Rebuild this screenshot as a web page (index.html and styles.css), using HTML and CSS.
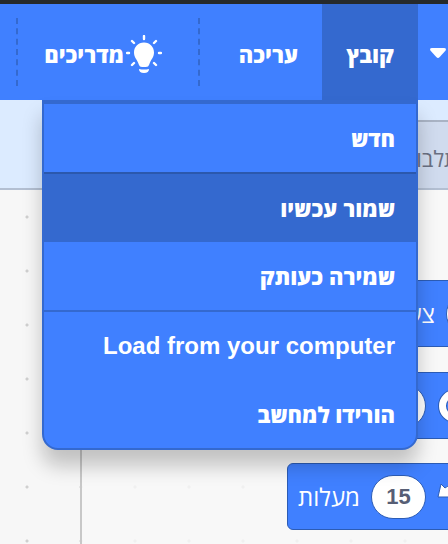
FILE: index.html
```html
<!DOCTYPE html>
<html lang="he" dir="rtl">
<head>
<meta charset="utf-8">
<title>Scratch</title>
<link rel="stylesheet" href="styles.css">
</head>
<body>
<header class="menu-bar">
  <button class="bar-item language" type="button" aria-label="שפה">
    <svg width="16" height="10" viewBox="0 0 16 10"><path d="M2 0H14Q17 0 15.400 2.800L9.700 9Q8 10.800 6.300 9L.6 2.800Q-1 0 2 0Z" fill="#fff"/></svg>
  </button>
  <div class="file">
    <button class="bar-item open" type="button">קובץ</button>
    <ul class="menu">
      <li><button class="menu-item" type="button">חדש</button></li>
      <li class="section strong"><button class="menu-item active" type="button">שמור עכשיו</button></li>
      <li><button class="menu-item" type="button">שמירה כעותק</button></li>
      <li class="section"><button class="menu-item latin" type="button" lang="en" dir="auto">Load from your computer</button></li>
      <li><button class="menu-item" type="button">הורידו למחשב</button></li>
    </ul>
  </div>
  <button class="bar-item" type="button">עריכה</button>
  <span class="divider"></span>
  <button class="bar-item guides" type="button">
    <svg width="36" height="38" viewBox="0 0 36 38" fill="none">
      <path d="M18 7.500C12 7.500 8 12 8 17.500C8 22 10.500 24 12 27.500L13 30Q13.500 32 16 32H20Q22.500 32 23 30L24 27.500C25.500 24 28 22 28 17.500C28 12 24 7.500 18 7.500Z" fill="#fff"/>
      <path d="M13 34Q18 35 23 34Q23 38 18 38Q13 38 13 34Z" fill="#fff"/>
      <path d="M18 1V4M6 6L8 8M30 6L28 8M1 18H3M33 18H35M6 30L8 28M30 30L28 28" stroke="#fff" stroke-width="2.400" stroke-linecap="round"/>
    </svg>
    <span>מדריכים</span>
  </button>
  <span class="divider"></span>
</header>
<nav class="tabs"><button class="tab" type="button">תלבושות</button></nav>
<main class="workspace">
  <div class="flyout"></div>
  <div class="block steps"><span class="value"></span><span>צעדים</span></div>
  <div class="block turn-right">
    <svg width="40" height="40" viewBox="0 0 40 40" fill="none"><circle cx="18" cy="20" r="12.500" stroke="#2c5cb5" stroke-width="9"/><circle cx="18" cy="20" r="12.500" stroke="#fff" stroke-width="7"/></svg>
    <span class="value"></span>
  </div>
  <div class="block turn-left">
    <svg width="40" height="40" viewBox="0 0 40 40"><path d="M4 7L8 11Q20 0 35 12V21Q26 14 19 18L15 20H1Z" fill="#fff" stroke="#2c5cb5"/></svg>
    <span class="value">15</span><span>מעלות</span>
  </div>
</main>
</body>
</html>
```
FILE: styles.css
```css
:root {
  --blue: #4080ff;
  --dark: #3469cf;
  --edge: #2c5cb5;
}

* {
  box-sizing: border-box;
}

body {
  margin: 0;
  height: 100vh;
  display: flex;
  flex-direction: column;
  overflow: hidden;
  font-family: "Open Sans", "Liberation Sans", sans-serif;
  font-size: 22px;
}

button {
  margin: 0;
  border: 0;
  background: none;
  color: #fff;
  font: inherit;
  font-weight: 800;
}

.menu-bar {
  position: relative;
  z-index: 2;
  flex: none;
  display: flex;
  align-items: center;
  height: 100px;
  border-top: 4px solid #262a2b;
  background: var(--blue);
}

.bar-item {
  flex: none;
  display: flex;
  align-items: center;
  height: 96px;
  padding: 4px 24px 0;
}

.language {
  width: 30px;
  padding: 2px 2px 0 12px;
}

.language svg {
  flex: none;
}

.file {
  position: relative;
  flex: none;
}

.open {
  background: var(--dark);
}

.guides {
  gap: 2px;
  padding: 4px 36px 0 24px;
}

.divider {
  flex: none;
  height: 68px;
  border-left: 2px dashed var(--dark);
}

.bar-item + .divider {
  margin-right: 15px;
}

.guides + .divider {
  margin-right: 2px;
}

.menu {
  position: absolute;
  top: 100%;
  right: 0;
  width: 376px;
  margin: 0;
  padding: 0;
  overflow: hidden;
  list-style: none;
  background: var(--blue);
  border: 2px solid var(--dark);
  border-top-width: 4px;
  border-radius: 0 0 16px 16px;
  box-shadow: 0 16px 20px rgba(0, 0, 0, 0.22);
}

.menu-item {
  display: block;
  width: 100%;
  height: 68px;
  padding: 0 21px;
  text-align: right;
}

.latin {
  font-family: "Liberation Sans", sans-serif;
  font-size: 24px;
}

.active {
  background: var(--dark);
}

.section {
  border-top: 2px solid var(--dark);
}

.strong {
  border-color: #2b58ad;
}

.tabs {
  flex: none;
  display: flex;
  align-items: flex-end;
  height: 90px;
  background: #dcebff;
  border-bottom: 2px solid #b3bfd2;
}

.tab {
  height: 68px;
  margin-right: -10px;
  padding: 6px 0 0 40px;
  border-top: 2px solid #a9b3c4;
  background: #d0dbee;
  color: #6a7082;
  font-size: 22px;
  font-weight: 500;
}

.workspace {
  position: relative;
  flex: 1;
  overflow: hidden;
  background: #f7f7f7 radial-gradient(circle, #d0d0d0 1px, transparent 2px) 0 0 / 54px 54px;
}

.flyout {
  height: 100%;
  margin-left: 80px;
  border-left: 2px solid #c8c8c8;
  background: rgba(247, 247, 247, 0.8);
}

.block {
  position: absolute;
  display: flex;
  align-items: center;
  gap: 11px;
  height: 67px;
  padding: 0 10px;
  border: 1px solid var(--edge);
  border-radius: 6px;
  background: var(--blue);
  color: #fff;
  font-size: 24px;
}

.value {
  display: grid;
  place-items: center;
  width: 55px;
  height: 44px;
  border: 1px solid var(--edge);
  border-radius: 22px;
  background: #fff;
  color: #575e75;
  font-family: "Liberation Sans", sans-serif;
  font-size: 22px;
  font-weight: bold;
}

.steps {
  top: 90px;
  right: -64px;
}

.turn-right {
  top: 182px;
  right: -40px;
}

.turn-left {
  top: 273px;
  right: -40px;
}
```
